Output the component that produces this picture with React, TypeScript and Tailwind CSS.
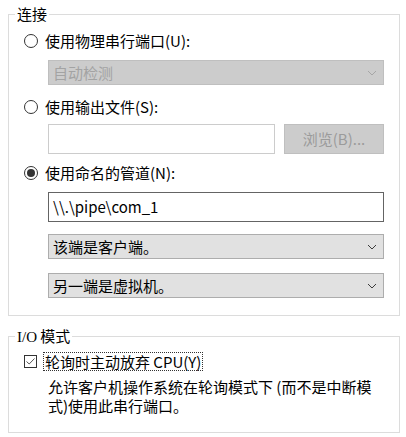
import React from 'react';

const font = { fontFamily: '"Noto Sans CJK SC", "Noto Sans", sans-serif' };

const Chevron: React.FC<{ disabled?: boolean }> = ({ disabled }) => (
  <svg width="10" height="6" viewBox="0 0 10 6" className="shrink-0">
    <path
      d="M1 1 L5 5 L9 1"
      fill="none"
      stroke={disabled ? '#a6a6a6' : '#3c3c3c'}
      strokeWidth="1"
    />
  </svg>
);

const Radio: React.FC<{ checked?: boolean; label: string }> = ({ checked, label }) => (
  <div className="flex items-center h-5 ml-[15px]">
    <span className="w-[14px] h-[14px] rounded-full border border-[#333] bg-white flex items-center justify-center">
      {checked && <span className="w-[8px] h-[8px] rounded-full bg-[#333]" />}
    </span>
    <span className="ml-[7px] text-[15px] leading-5 text-black">{label}</span>
  </div>
);

const Combo: React.FC<{ text: string; disabled?: boolean; className?: string }> = ({
  text,
  disabled,
  className = '',
}) => (
  <div
    className={`ml-[39px] w-[336px] h-[25px] flex items-center justify-between pl-[4px] pr-[6px] border ${
      disabled ? 'bg-[#cccccc] border-[#bfbfbf] text-[#a3a3a3]' : 'bg-[#e1e1e1] border-[#adadad] text-black'
    } ${className}`}
  >
    <span className="text-[15px] leading-5">{text}</span>
    <Chevron disabled={disabled} />
  </div>
);

const GroupBox: React.FC<{ title: React.ReactNode; className?: string; children: React.ReactNode }> = ({
  title,
  className = '',
  children,
}) => (
  <div className={`relative ml-[8px] w-[392px] border border-[#dcdcdc] ${className}`}>
    <div className="absolute -top-[11px] left-[6px] bg-white px-[2px] text-[15px] leading-5 text-black">
      {title}
    </div>
    {children}
  </div>
);

export default function App() {
  return (
    <div className="w-[406px] h-[437px] bg-white overflow-hidden pt-[14px]" style={font}>
      <GroupBox title="连接" className="pb-[17px]">
        <div className="mt-[16px]">
          <Radio label="使用物理串行端口(U):" />
        </div>
        <Combo text="自动检测" disabled className="mt-[9px]" />

        <div className="mt-[12px]">
          <Radio label="使用输出文件(S):" />
        </div>
        <div className="mt-[7px] ml-[39px] flex gap-[9px]">
          <div className="w-[227px] h-[30px] bg-white border border-[#cccccc]" />
          <div className="w-[100px] h-[30px] bg-[#cccccc] border border-[#bfbfbf] flex items-center justify-center text-[15px] text-[#9b9b9b]">
            浏览(B)...
          </div>
        </div>

        <div className="mt-[9px]">
          <Radio checked label="使用命名的管道(N):" />
        </div>
        <div className="mt-[9px] ml-[39px] w-[336px] h-[30px] border border-[#646464] bg-white flex items-center pl-[4px] text-[15px] text-black">
          \\.\pipe\com_1
        </div>
        <Combo text="该端是客户端。" className="mt-[12px]" />
        <Combo text="另一端是虚拟机。" className="mt-[14px]" />
      </GroupBox>

      <GroupBox
        title={
          <span>
            <span style={{ fontFamily: '"Liberation Serif", serif' }}>I/O</span> 模式
          </span>
        }
        className="mt-[20px] pb-[17px]"
      >
        <div className="mt-[14px] ml-[15px] flex items-center h-5">
          <span className="w-[13px] h-[13px] border border-[#333] bg-white flex items-center justify-center">
            <svg width="11" height="11" viewBox="0 0 11 11">
              <path d="M1.5 5.5 L4.2 8 L9.5 2.5" fill="none" stroke="#555" strokeWidth="1" />
            </svg>
          </span>
          <span className="ml-[6px] border border-dotted border-[#333] px-[1px] text-[15px] leading-[17px] text-black">
            轮询时主动放弃 CPU(Y)
          </span>
        </div>
        <div className="mt-[6px] ml-[39px] text-[15px] leading-[19px] text-black whitespace-nowrap">
          允许客户机操作系统在轮询模式下 (而不是中断模
          <br />
          式)使用此串行端口。
        </div>
      </GroupBox>
    </div>
  );
}
